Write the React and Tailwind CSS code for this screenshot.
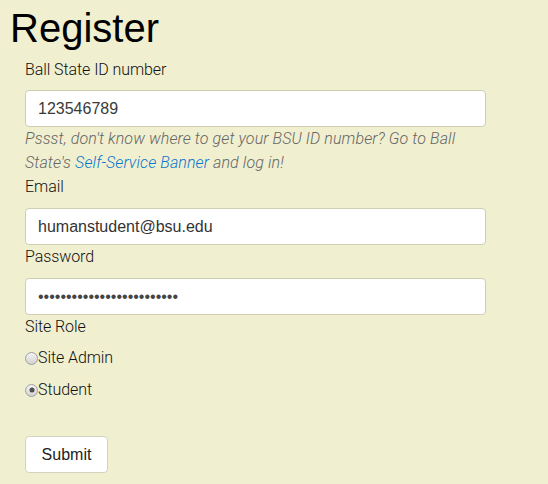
function Radio({ checked }) {
  return (
    <span className="relative inline-block w-[13px] h-[13px] rounded-full border border-[#a0a0a0] bg-gradient-to-b from-[#f4f4f4] to-[#d2d2d2] shrink-0">
      {checked && (
        <span className="absolute left-1/2 top-1/2 -translate-x-1/2 -translate-y-1/2 w-[5px] h-[5px] rounded-full bg-[#505050]" />
      )}
    </span>
  );
}

export default function App() {
  const roboto = { fontFamily: 'Roboto, "Liberation Sans", sans-serif' };
  const arial = { fontFamily: '"Liberation Sans", Arial, sans-serif' };
  return (
    <div className="min-h-[484px] w-full bg-[#f0efd0] text-[#111] font-light tracking-[-0.08px]" style={roboto}>
      <h1 className="pl-[10px] pt-[4px] text-[40px] leading-[48px] text-black font-normal tracking-normal" style={arial}>
        Register
      </h1>
      <form className="pl-[25px] w-[486px]" onSubmit={(e) => e.preventDefault()}>
        <label className="block pt-[6px] text-[16px] leading-[24px] mb-[8px]">Ball State ID number</label>
        <input
          className="block w-full h-[37px] rounded-[4px] border border-[#cfceb3] bg-white px-[12px] text-[16px] text-[#3a3a3a] font-normal tracking-normal outline-none"
          style={arial}
          defaultValue="123546789"
        />
        <p className="text-[16px] leading-[24px] italic text-[#666] pr-[10px] tracking-[0.11px]">
          Pssst, don't know where to get your BSU ID number? Go to Ball State's{' '}
          <a href="#" className="text-[#0877cc]">Self-Service Banner</a> and log in!
        </p>
        <label className="block text-[16px] leading-[24px] mb-[9px]">Email</label>
        <input
          className="block w-full h-[37px] rounded-[4px] border border-[#cfceb3] bg-white px-[12px] text-[16px] text-[#333] font-normal tracking-normal outline-none"
          style={arial}
          defaultValue="humanstudent@bsu.edu"
        />
        <label className="block text-[16px] leading-[24px] mb-[9px]">Password</label>
        <input
          type="password"
          className="block w-full h-[37px] rounded-[4px] border border-[#cfceb3] bg-white px-[12px] text-[16px] text-[#444] font-normal tracking-normal outline-none"
          style={arial}
          defaultValue="abcdefghijklmnopqrstuvwxy"
        />
        <label className="block text-[16px] leading-[24px]">Site Role</label>
        <label className="mt-[7px] flex items-center h-[24px] text-[16px]">
          <Radio />
          <span>Site Admin</span>
        </label>
        <label className="mt-[8px] flex items-center h-[24px] text-[16px]">
          <Radio checked />
          <span>Student</span>
        </label>
        <button
          type="submit"
          className="mt-[34px] h-[37px] w-[83px] rounded-[4px] border border-[#d4d3c0] bg-white text-[16px] text-[#222] font-normal tracking-normal"
          style={arial}
        >
          Submit
        </button>
      </form>
    </div>
  );
}
